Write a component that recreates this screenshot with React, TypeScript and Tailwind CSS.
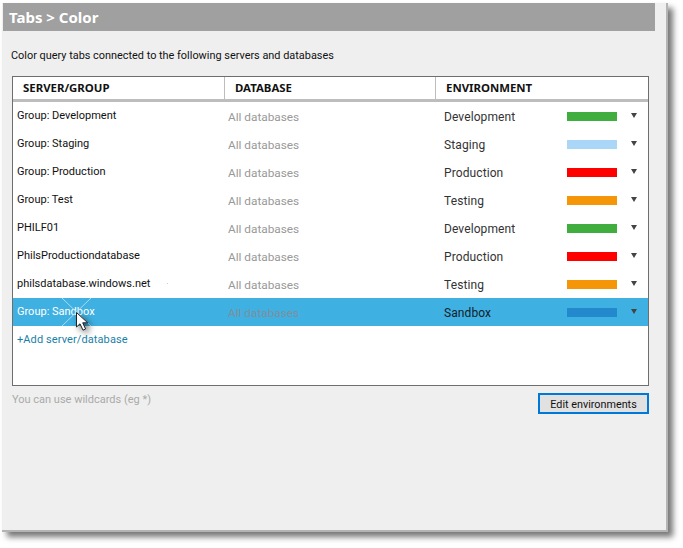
const rows = [
  { s: "Group: Development", e: "Development", c: "bg-[#3fae3f]" },
  { s: "Group: Staging", e: "Staging", c: "bg-[#aad6f8]" },
  { s: "Group: Production", e: "Production", c: "bg-[#ff0000]" },
  { s: "Group: Test", e: "Testing", c: "bg-[#f59609]" },
  { s: "PHILF01", e: "Development", c: "bg-[#3fae3f]" },
  { s: "PhilsProductiondatabase", e: "Production", c: "bg-[#ff0000]" },
  { s: "philsdatabase.windows.net", e: "Testing", c: "bg-[#f59609]", speck: true },
  { s: "Group: Sandbox", e: "Sandbox", c: "bg-[#2389cd]", sel: true },
];

function Row({ s, e, c, sel, speck }: { s: string; e: string; c: string; sel?: boolean; speck?: boolean }) {
  return (
    <div className={`relative flex h-7 items-center font-['Roboto',sans-serif] ${sel ? "bg-[#3fb0e2]" : ""}`}>
      <div className={`w-[212px] pl-1 pt-[1px] text-[11px] ${sel ? "text-white" : "text-[#111]"}`}>{s}</div>
      <div className={`w-[219px] pl-[3px] pt-[3px] text-[11.8px] ${sel ? "text-[#7f8f9a]" : "text-[#999]"}`}>All databases</div>
      <div className={`w-[123px] pt-[1px] text-[12px] tracking-[0.1px] ${sel ? "text-[#14202a]" : "text-[#333]"}`}>{e}</div>
      <div className={`h-[9px] w-[50px] ${c}`} />
      <svg width="6" height="5" viewBox="0 0 6 5" className="mb-[1px] ml-[14px]">
        <path d="M0 0H6L3 5Z" fill="#444" />
      </svg>
      {speck && <span className="absolute left-[154px] top-[13px] h-px w-px bg-[#d8c8c0]" />}
      {sel && (
        <svg width="48" height="40" viewBox="0 0 48 40" className="absolute left-[49px] top-0 overflow-visible">
          <path d="M0 0L29 28M29 0L0 28" stroke="#a8dcf3" strokeWidth="1" />
          <path
            d="M14.5 14.5V29l3.5-3.2 3 6.4 2.6-1.2-2.9-6.2h5Z"
            fill="#fff"
            stroke="#222"
            strokeWidth="1"
            className="drop-shadow-[3px_3px_3px_rgba(0,0,0,0.55)]"
          />
        </svg>
      )}
    </div>
  );
}

export default function App() {
  return (
    <div className="h-[548px] w-[683px] bg-white pl-[2px] pt-[3px] font-['Noto_Sans',sans-serif]">
      <div className="h-[529px] w-[666px] border-r-2 border-b-2 border-[#b4b4b4] bg-[#efefef] pl-px shadow-[5px_5px_6px_#777]">
        <div className="flex h-[28px] w-[652px] items-center bg-[#a0a0a0] pl-[6px] text-[15px] font-bold text-white">Tabs &gt; Color</div>
        <p className="ml-[8px] mt-[17px] font-['Roboto',sans-serif] text-[10.9px] leading-4 text-[#111]">Color query tabs connected to the following servers and databases</p>
        <div className="ml-[9px] mt-[12px] h-[310px] w-[637px] border border-[#6e6e6e] bg-white">
          <div className="flex h-[25px] border-b-[3px] border-[#bdbdbd] text-[11.4px] font-bold text-[#111]">
            <div className="w-[212px] border-r border-[#bdbdbd] pl-[10px] leading-[22px]">SERVER/GROUP</div>
            <div className="w-[211px] border-r border-[#bdbdbd] pl-[10px] leading-[22px]">DATABASE</div>
            <div className="pl-[10px] leading-[22px]">ENVIRONMENT</div>
          </div>
          {rows.map((r) => (
            <Row key={r.s} {...r} />
          ))}
          <div className="pl-1 pt-[6px] font-['Roboto',sans-serif] text-[11px] leading-4 tracking-[0.1px] text-[#1a7fa8]">+Add server/database</div>
        </div>
        <div className="ml-[9px] mt-[5px] flex w-[637px] items-start justify-between font-['Roboto',sans-serif]">
          <span className="pt-px text-[11px] leading-4 text-[#aaa]">You can use wildcards (eg *)</span>
          <button className="mt-[2px] h-[21px] w-[111px] border-2 border-[#0078d7] bg-[#e1e1e1] pt-[2px] text-[10.8px] leading-[14px] text-[#111]">Edit environments</button>
        </div>
      </div>
    </div>
  );
}
